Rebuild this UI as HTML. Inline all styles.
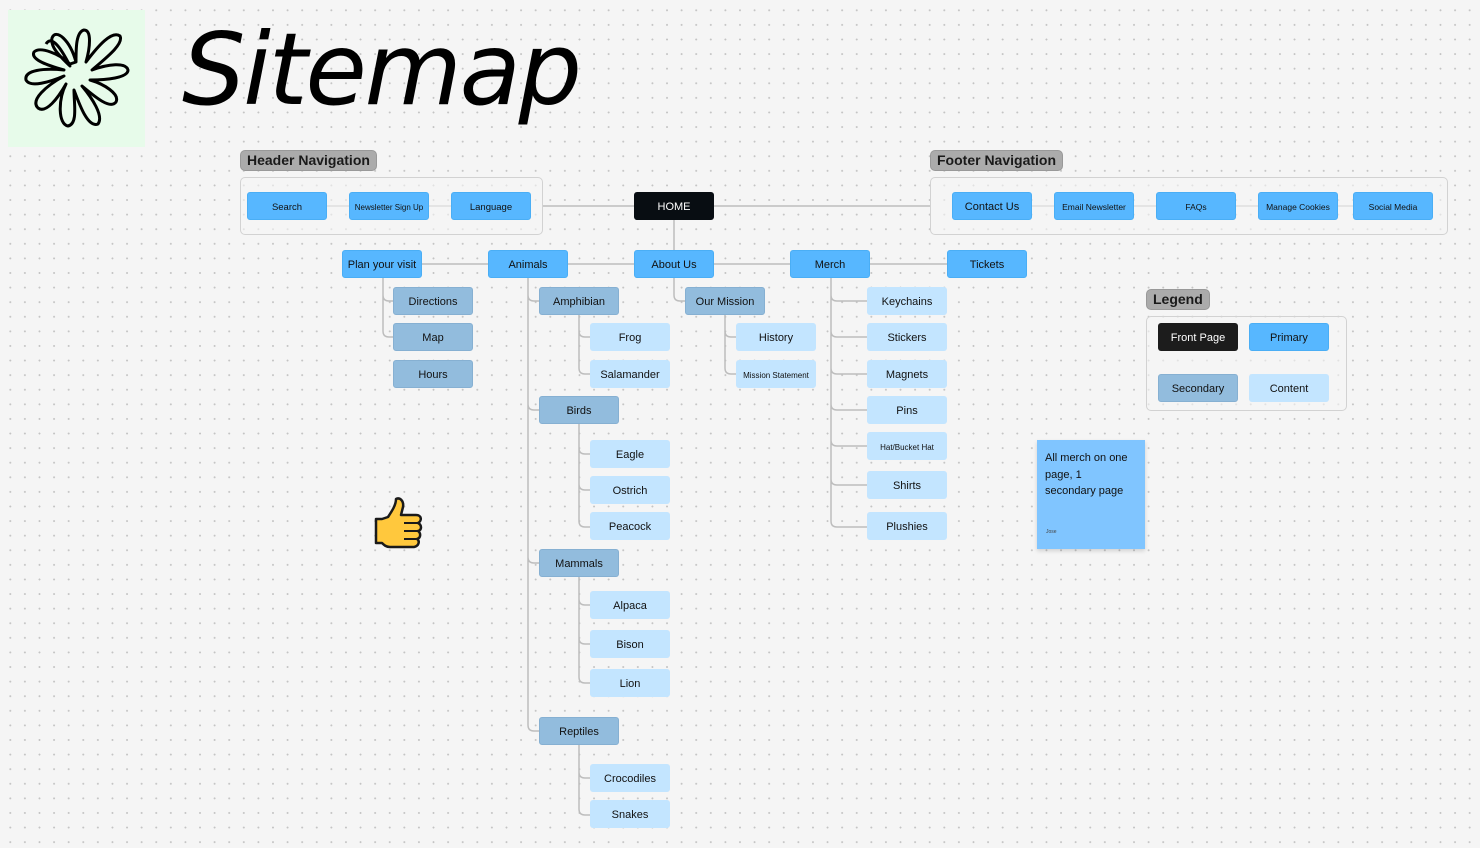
<!DOCTYPE html>
<html><head><meta charset="utf-8"><style>
*{margin:0;padding:0;box-sizing:border-box}
body{width:1480px;height:848px;overflow:hidden;background-color:#f5f5f5;background-image:radial-gradient(circle,#c4c4c4 0.8px,transparent 1.1px);background-size:14.6px 14.6px;background-position:3px 3px;font-family:"Liberation Sans",sans-serif;position:relative}
.b{position:absolute;width:80px;height:28px;border-radius:3px;display:flex;align-items:center;justify-content:center;font-size:11px;color:#111;white-space:nowrap;padding-top:2px}
.p{background:#57b7ff;border:1px solid #4aaef5}
.s{background:#92bcdd;border:1px solid #86b0d2}
.c{background:#c3e5ff}
.k{background:#1c1c1c;color:#fff}
.sm{font-size:8.5px}
.lbl{position:absolute;height:21px;background:#ababab;border:1px solid #999;border-radius:5px;font-size:14px;font-weight:bold;color:#1a1a1a;padding:0 6px;line-height:19px}
.grp{position:absolute;border:1px solid #d2d2d2;border-radius:5px;background:rgba(245,245,245,.6)}
svg{position:absolute;left:0;top:0}
</style></head><body>
<div style="position:absolute;left:8px;top:10px;width:137px;height:137px;background:#e7fbea"></div>
<svg width="1480" height="848" fill="none">
<g stroke="#000" stroke-width="3" stroke-linejoin="round">
<path d="M76 62 C70 40 56 28 52 38 C50 48 62 58 70 66 C62 50 52 34 46 44 M70 64 C60 54 40 46 34 52 C30 60 50 66 64 70 C44 68 24 70 26 80 C30 88 50 82 64 76 C46 86 30 100 38 108 C46 114 58 98 66 84 C58 100 58 124 68 126 C78 124 74 104 74 90 C80 106 88 128 98 124 C104 116 92 98 82 86 C94 96 110 110 116 102 C120 94 104 84 90 80 C106 80 128 78 128 70 C126 62 108 64 92 70 C106 58 124 44 120 36 C112 30 98 46 86 62 C90 48 92 30 84 30 C76 32 76 48 76 62 Z"/>
</g>
<text x="182" y="104" font-family="DejaVu Sans" font-style="italic" font-size="100" fill="#000" textLength="400">Sitemap</text>
<g stroke="#bdbdbd" stroke-width="1.5">
<path d="M327 206H349M429 206H451M543 206H634M714 206H930M1032 206H1054M1134 206H1156M1236 206H1258M1338 206H1353"/>
<path d="M674 220V250M422 264H947"/>
<path d="M383 278V295q0 6 6 6h4M383 295V331q0 6 6 6h4"/>
<path d="M528 278V725q0 6 6 6h5M528 295q0 6 6 6h5M528 404q0 6 6 6h5M528 557q0 6 6 6h5"/>
<path d="M579 315V368q0 6 6 6h5M579 331q0 6 6 6h5"/>
<path d="M579 424V521q0 6 6 6h5M579 448q0 6 6 6h5M579 484q0 6 6 6h5"/>
<path d="M579 577V677q0 6 6 6h5M579 599q0 6 6 6h5M579 638q0 6 6 6h5"/>
<path d="M579 745V809q0 6 6 6h5M579 772q0 6 6 6h5"/>
<path d="M674 278V295q0 6 6 6h5"/>
<path d="M725 315V368q0 6 6 6h5M725 331q0 6 6 6h5"/>
<path d="M831 278V521q0 6 6 6h30M831 295q0 6 6 6h30M831 331q0 6 6 6h30M831 368q0 6 6 6h30M831 404q0 6 6 6h30M831 440q0 6 6 6h30M831 479q0 6 6 6h30"/>
</g>
<g transform="translate(374,497)">
<path d="M14 20 C18 14 22 8 22 2 C26 0 30 4 29 10 L27 18 L42 18 C48 18 48 24 44 26 C48 28 48 33 44 34 C47 36 47 41 43 42 C46 44 45 49 40 50 L16 50 C12 50 10 48 8 46 L2 46 L2 22 L8 22 Z" fill="#ffc83d" stroke="#1a1a1a" stroke-width="2.5" stroke-linejoin="round"/>
<path d="M30 26H44M30 34H44M30 42H42" stroke="#1a1a1a" stroke-width="2"/>
</g>
</svg>
<div class="lbl" style="left:240px;top:150px">Header Navigation</div>
<div class="lbl" style="left:930px;top:150px">Footer Navigation</div>
<div class="lbl" style="left:1146px;top:289px">Legend</div>
<div class="grp" style="left:240px;top:177px;width:303px;height:58px"></div>
<div class="grp" style="left:930px;top:177px;width:518px;height:58px"></div>
<div class="grp" style="left:1146px;top:316px;width:201px;height:95px"></div>
<div class="b p" style="left:247px;top:192px;font-size:9.5px">Search</div>
<div class="b p sm" style="left:349px;top:192px;font-size:8px">Newsletter Sign Up</div>
<div class="b p" style="left:451px;top:192px;font-size:9.5px">Language</div>
<div class="b k" style="left:634px;top:192px;background:#080d12">HOME</div>
<div class="b p" style="left:952px;top:192px">Contact Us</div>
<div class="b p sm" style="left:1054px;top:192px">Email Newsletter</div>
<div class="b p sm" style="left:1156px;top:192px">FAQs</div>
<div class="b p sm" style="left:1258px;top:192px">Manage Cookies</div>
<div class="b p sm" style="left:1353px;top:192px">Social Media</div>
<div class="b p" style="left:342px;top:250px">Plan your visit</div>
<div class="b p" style="left:488px;top:250px">Animals</div>
<div class="b p" style="left:634px;top:250px">About Us</div>
<div class="b p" style="left:790px;top:250px">Merch</div>
<div class="b p" style="left:947px;top:250px">Tickets</div>
<div class="b s" style="left:393px;top:287px">Directions</div>
<div class="b s" style="left:393px;top:323px">Map</div>
<div class="b s" style="left:393px;top:360px">Hours</div>
<div class="b s" style="left:539px;top:287px">Amphibian</div>
<div class="b c" style="left:590px;top:323px">Frog</div>
<div class="b c" style="left:590px;top:360px">Salamander</div>
<div class="b s" style="left:539px;top:396px">Birds</div>
<div class="b c" style="left:590px;top:440px">Eagle</div>
<div class="b c" style="left:590px;top:476px">Ostrich</div>
<div class="b c" style="left:590px;top:512px">Peacock</div>
<div class="b s" style="left:539px;top:549px">Mammals</div>
<div class="b c" style="left:590px;top:591px">Alpaca</div>
<div class="b c" style="left:590px;top:630px">Bison</div>
<div class="b c" style="left:590px;top:669px">Lion</div>
<div class="b s" style="left:539px;top:717px">Reptiles</div>
<div class="b c" style="left:590px;top:764px">Crocodiles</div>
<div class="b c" style="left:590px;top:800px">Snakes</div>
<div class="b s" style="left:685px;top:287px">Our Mission</div>
<div class="b c" style="left:736px;top:323px">History</div>
<div class="b c sm" style="left:736px;top:360px;font-size:8px">Mission Statement</div>
<div class="b c" style="left:867px;top:287px">Keychains</div>
<div class="b c" style="left:867px;top:323px">Stickers</div>
<div class="b c" style="left:867px;top:360px">Magnets</div>
<div class="b c" style="left:867px;top:396px">Pins</div>
<div class="b c sm" style="left:867px;top:432px;font-size:8px">Hat/Bucket Hat</div>
<div class="b c" style="left:867px;top:471px">Shirts</div>
<div class="b c" style="left:867px;top:512px">Plushies</div>
<div class="b k" style="left:1158px;top:323px">Front Page</div>
<div class="b p" style="left:1249px;top:323px">Primary</div>
<div class="b s" style="left:1158px;top:374px">Secondary</div>
<div class="b c" style="left:1249px;top:374px">Content</div>
<div style="position:absolute;left:1037px;top:440px;width:108px;height:109px;background:#80c5ff;box-shadow:0 2px 4px rgba(0,0,0,.15);padding:10px 8px;font-size:11px;line-height:16.5px;color:#111"><div style="width:88px">All merch on one page, 1 secondary page</div><div style="position:absolute;left:9px;bottom:9px;font-size:5px;color:#444">Jose</div></div>
</body></html>
